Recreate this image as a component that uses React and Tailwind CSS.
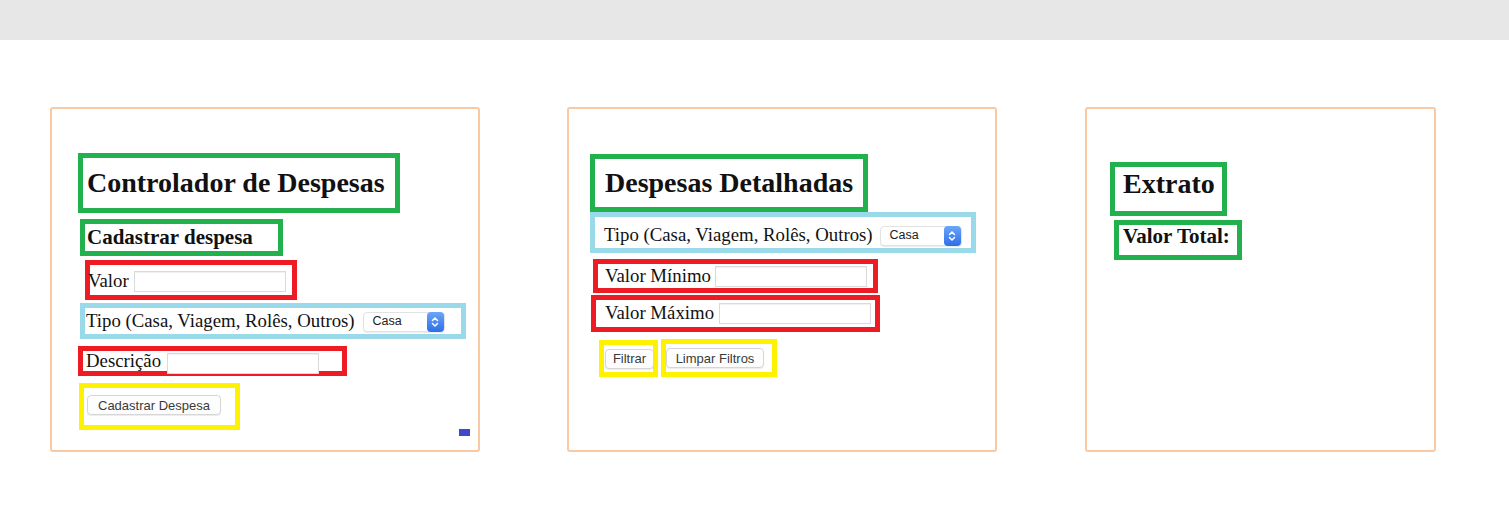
import React from 'react';

const TextInput = ({ className = '' }) => (
    <input
        type="text"
        className={`h-[21px] w-[152px] shrink-0 border border-[#dadada] bg-white shadow-[inset_0_1px_1px_rgba(0,0,0,0.06)] outline-none ${className}`}
    />
);

const FakeSelect = ({ className = '' }) => (
    <div className={`flex h-[20px] w-[82px] shrink-0 items-center justify-between rounded-[4px] border border-[#e2e2e2] bg-white pl-[9px] shadow-[0_1px_1px_rgba(0,0,0,0.08)] ${className}`}>
        <span className="font-['Liberation_Sans',Arial,sans-serif] text-[12.5px] leading-none text-[#222]">Casa</span>
        <span className="flex h-[20px] w-[17px] items-center justify-center rounded-[4px] bg-gradient-to-b from-[#6aa6fa] to-[#2e6de6]">
            <svg width="8" height="12" viewBox="0 0 8 12" fill="none" stroke="white" strokeWidth="1.5" strokeLinecap="round" strokeLinejoin="round">
                <path d="M1.5 4.5 L4 2 L6.5 4.5" />
                <path d="M1.5 7.5 L4 10 L6.5 7.5" />
            </svg>
        </span>
    </div>
);

const Button = ({ children, className = '' }) => (
    <button className={`flex h-[20px] shrink-0 items-center justify-center rounded-[4px] border border-[#d6d6d6] bg-[#fdfdfd] font-['Liberation_Sans',Arial,sans-serif] text-[13px] leading-none text-[#3a3a3a] shadow-[0_1px_1px_rgba(0,0,0,0.08)] ${className}`}>
        {children}
    </button>
);

export default function App() {
    return (
        <div className="min-h-screen bg-white font-['Liberation_Serif','Times_New_Roman',serif] text-[#111]">
            {/* Top bar */}
            <div className="h-10 w-full bg-[#e7e7e7]" />

            <div className="flex items-start pl-[50px] pt-[67px]">
                {/* Panel 1 */}
                <section className="flex h-[345px] w-[430px] shrink-0 flex-col rounded-[3px] border-2 border-[#f9c9a3]">
                    <div className="ml-[26px] mt-[44px] flex h-[60px] w-[322px] items-center border-[5px] border-[#22b14c] pl-[4px]">
                        <h1 className="text-[28px] font-bold leading-none">Controlador de Despesas</h1>
                    </div>
                    <div className="ml-[28px] mt-[6px] flex h-[37px] w-[203px] items-center border-[5px] border-[#22b14c] pl-[2px]">
                        <h2 className="text-[21px] font-bold leading-none">Cadastrar despesa</h2>
                    </div>
                    <div className="ml-[33px] mt-[4px] flex h-[40px] w-[212px] items-center border-[5px] border-[#ed1c24] pt-[3px]">
                        <label className="-ml-[2px] text-[18.8px] leading-none">Valor</label>
                        <TextInput className="ml-[5px]" />
                    </div>
                    <div className="ml-[28px] mt-[3px] flex h-[36px] w-[386px] items-center border-[5px] border-[#99d9ea] pl-[1px] pt-[1px]">
                        <label className="text-[18.8px] leading-none">Tipo (Casa, Viagem, Rolês, Outros)</label>
                        <FakeSelect className="ml-[8px]" />
                    </div>
                    <div className="ml-[26px] mt-[7px] flex h-[30px] w-[269px] items-center border-[5px] border-[#ed1c24] pl-[3px]">
                        <label className="text-[18.8px] leading-none">Descrição</label>
                        <TextInput className="ml-[6px] mt-[4px]" />
                    </div>
                    <div className="mt-[7px] flex items-start">
                        <div className="ml-[27px] flex h-[47px] w-[161px] items-start border-[5px] border-[#fff200] pl-[3px] pt-[7px]">
                            <Button className="w-[134px]">Cadastrar Despesa</Button>
                        </div>
                        <div className="ml-[219px] mt-[46px] h-[7px] w-[11px] bg-[#3f48cc]" />
                    </div>
                </section>

                {/* Panel 2 */}
                <section className="ml-[87px] flex h-[345px] w-[430px] shrink-0 flex-col rounded-[3px] border-2 border-[#f9c9a3]">
                    <div className="ml-[21px] mt-[45px] flex h-[58px] w-[278px] items-center border-[5px] border-[#22b14c] pl-[10px]">
                        <h1 className="text-[28px] font-bold leading-none">Despesas Detalhadas</h1>
                    </div>
                    <div className="ml-[21px] flex h-[41px] w-[386px] items-center border-[5px] border-[#99d9ea] pl-[9px] pt-[6px]">
                        <label className="text-[18.8px] leading-none">Tipo (Casa, Viagem, Rolês, Outros)</label>
                        <FakeSelect className="ml-[7px]" />
                    </div>
                    <div className="ml-[24px] mt-[6px] flex h-[34px] w-[285px] items-center border-[5px] border-[#ed1c24] pl-[7px]">
                        <label className="text-[18.8px] leading-none">Valor Mínimo</label>
                        <TextInput className="ml-[4px]" />
                    </div>
                    <div className="ml-[22px] mt-[2px] flex h-[37px] w-[289px] items-center border-[5px] border-[#ed1c24] pl-[9px]">
                        <label className="text-[18.8px] leading-none">Valor Máximo</label>
                        <TextInput className="ml-[5px]" />
                    </div>
                    <div className="ml-[30px] mt-[8px] flex items-start">
                        <div className="flex h-[37px] w-[59px] items-center border-[5px] border-[#fff200] pl-[1px]">
                            <Button className="w-[49px]">Filtrar</Button>
                        </div>
                        <div className="-mt-[1px] ml-[3px] flex h-[38px] w-[116px] items-center border-[5px] border-[#fff200]">
                            <Button className="w-[98px]">Limpar Filtros</Button>
                        </div>
                    </div>
                </section>

                {/* Panel 3 */}
                <section className="ml-[88px] flex h-[345px] w-[351px] shrink-0 flex-col rounded-[3px] border-2 border-[#f9c9a3]">
                    <div className="ml-[23px] mt-[53px] flex h-[54px] w-[117px] items-center border-[5px] border-[#22b14c] pb-[10px] pl-[8px]">
                        <h1 className="text-[28px] font-bold leading-none">Extrato</h1>
                    </div>
                    <div className="ml-[27px] mt-[4px] flex h-[40px] w-[128px] items-center border-[5px] border-[#22b14c] pb-[7px] pl-[4px]">
                        <h2 className="text-[21px] font-bold leading-none">Valor Total:</h2>
                    </div>
                </section>
            </div>
        </div>
    );
}
